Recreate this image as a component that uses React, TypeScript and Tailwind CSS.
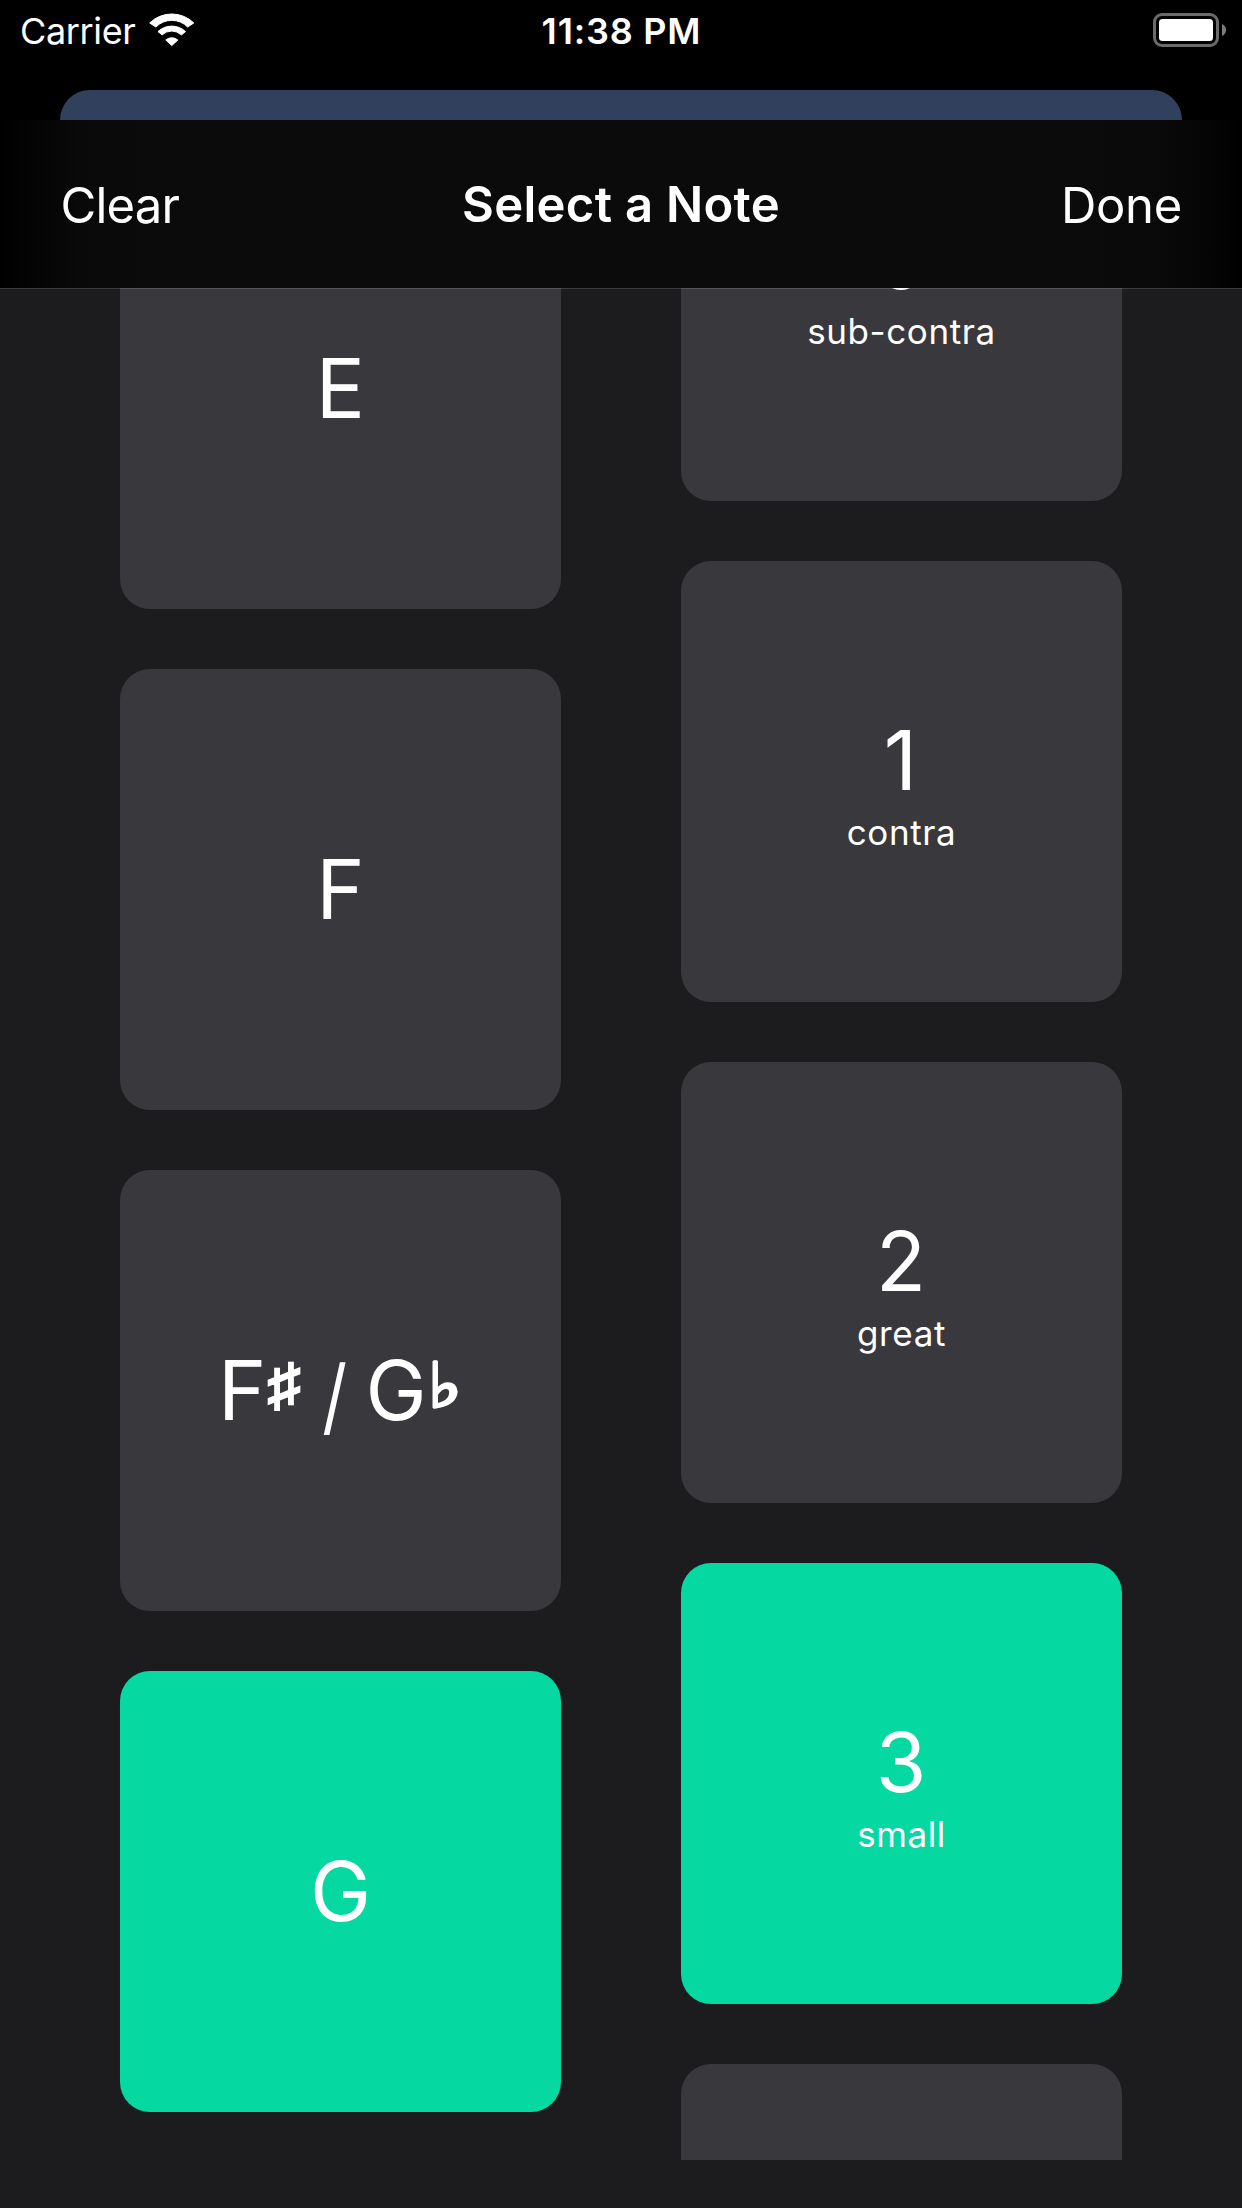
type NoteItem = { id: string; selected?: boolean };
type OctaveItem = { value: string; name: string; selected?: boolean };

const notes: NoteItem[] = [
  { id: "E" },
  { id: "F" },
  { id: "F♯ / G♭" },
  { id: "G", selected: true },
];

const octaves: OctaveItem[] = [
  { value: "0", name: "sub-contra" },
  { value: "1", name: "contra" },
  { value: "2", name: "great" },
  { value: "3", name: "small", selected: true },
];

function WifiIcon() {
  return (
    <svg className="h-[34px] w-[46px]" viewBox="0 0 46 34" fill="#fff" stroke="#fff" strokeWidth="1" strokeLinejoin="round">
      <path d="M0.7 10 A31.5 31.5 0 0 1 44.8 10 L38.7 14 A22.3 22.3 0 0 0 6.9 14 Z" />
      <path d="M9 18.6 A20 20 0 0 1 36.5 18.6 L32.4 21.9 A14 14 0 0 0 13.1 21.9 Z" />
      <path d="M16.8 27 A9.2 9.2 0 0 1 28.8 27 L22.8 32.6 Z" />
    </svg>
  );
}

function BatteryIcon() {
  return (
    <svg className="h-[34px] w-[74px]" viewBox="0 0 74 34" fill="none">
      <rect x="1.5" y="1.5" width="63" height="31" rx="7.5" stroke="#6b6b6b" strokeWidth="3" />
      <rect x="6" y="6" width="54" height="22" rx="3.5" fill="#fff" />
      <path d="M69 11 C71.6 12 73 14.4 73 17 C73 19.6 71.6 22 69 23 Z" fill="#7c7c7c" />
    </svg>
  );
}

function StatusBar() {
  return (
    <div className="grid h-[90px] grid-cols-[1fr_auto_1fr] items-start text-[36px] leading-[44px]">
      <div className="flex items-start pt-[9px] pl-5">
        <span className="tracking-[-0.35px]">Carrier</span>
        <span className="mt-1 ml-[13.5px]">
          <WifiIcon />
        </span>
      </div>
      <div className="pt-[9px] pl-[1px] font-semibold tracking-[0.8px]">11:38 PM</div>
      <div className="flex justify-end pt-[13px] pr-[15px]">
        <BatteryIcon />
      </div>
    </div>
  );
}

function Header() {
  return (
    <header className="grid h-[168px] grid-cols-[1fr_auto_1fr] items-start bg-[linear-gradient(90deg,#000_0px,#040404_30px,#090909_80px,#0b0b0b_150px,#0b0b0b_1092px,#090909_1162px,#040404_1212px,#000_1242px)] px-[60px] text-[49px] leading-[60px]">
      <button className="mt-[56px] ml-[0.5px] justify-self-start tracking-[-0.8px]">Clear</button>
      <h1 className="mt-[55px] font-semibold tracking-[0.28px]">Select a Note</h1>
      <button className="mt-[56px] justify-self-end tracking-[-0.3px]">Done</button>
    </header>
  );
}

/** Enharmonic label; the accidentals are drawn smaller and heavier than the letters. */
function EnharmonicLabel() {
  return (
    <span className="flex w-[245px] items-baseline">
      <span className="w-[48px]">F</span>
      <span className="flex w-[35px] justify-center leading-none">
        <span className="inline-block -translate-y-[15px] scale-x-[1.1] scale-y-[0.95] text-[60px] font-medium [-webkit-text-stroke:2.5px_white]">♯</span>
      </span>
      <span className="ml-[18px] flex w-[32px] justify-center">
        <span className="inline-block translate-y-[5px] scale-x-[0.84] scale-y-[1.02]">/</span>
      </span>
      <span className="ml-[14px] w-[62px]">G</span>
      <span className="flex w-[34px] justify-center leading-none">
        <span className="inline-block -translate-y-[13px] scale-x-[1.15] text-[62px] [-webkit-text-stroke:3px_white]">♭</span>
      </span>
    </span>
  );
}

const cardBase = "flex h-[441px] w-[441px] shrink-0 flex-col items-center justify-center rounded-[30px]";

function NoteCard({ note }: { note: NoteItem }) {
  return (
    <button className={`${cardBase} ${note.selected ? "bg-[#06d8a2]" : "bg-[#39383c]"}`}>
      <span className="text-[82px] leading-[100px]">{note.id.includes("/") ? <EnharmonicLabel /> : note.id}</span>
    </button>
  );
}

function OctaveCard({ octave }: { octave: OctaveItem }) {
  return (
    <button className={`${cardBase} ${octave.selected ? "bg-[#06d8a2]" : "bg-[#39383c]"}`}>
      <span className={`mt-px text-[82px] leading-[100px] ${octave.value === "1" ? "pr-[2px]" : "pr-px"}`}>{octave.value}</span>
      <span className="text-[35px] leading-[42px] tracking-[0.6px]">{octave.name}</span>
    </button>
  );
}

export default function App() {
  return (
    <div className="flex h-[2208px] w-[1242px] flex-col overflow-hidden bg-black font-['Inter',sans-serif] text-white">
      <StatusBar />
      <div className="mx-[60px] h-[30px] rounded-t-[30px] bg-[#31415d]" />
      <Header />
      <main className="relative h-[1920px] bg-[#1c1c1e] pb-[48px]">
        <div className="flex h-[1872px] items-start gap-[120px] overflow-hidden pl-[120px]">
          <div className="-mt-[120px] flex flex-col gap-[60px]">
            {notes.map((n) => (
              <NoteCard key={n.id} note={n} />
            ))}
          </div>
          <div className="-mt-[228px] flex flex-col gap-[60px]">
            {octaves.map((o) => (
              <OctaveCard key={o.value} octave={o} />
            ))}
            <div className="h-[441px] w-[441px] rounded-[30px] bg-[#39383c]" />
          </div>
        </div>
        <div className="absolute inset-x-0 top-0 h-px bg-white/15" />
      </main>
    </div>
  );
}
